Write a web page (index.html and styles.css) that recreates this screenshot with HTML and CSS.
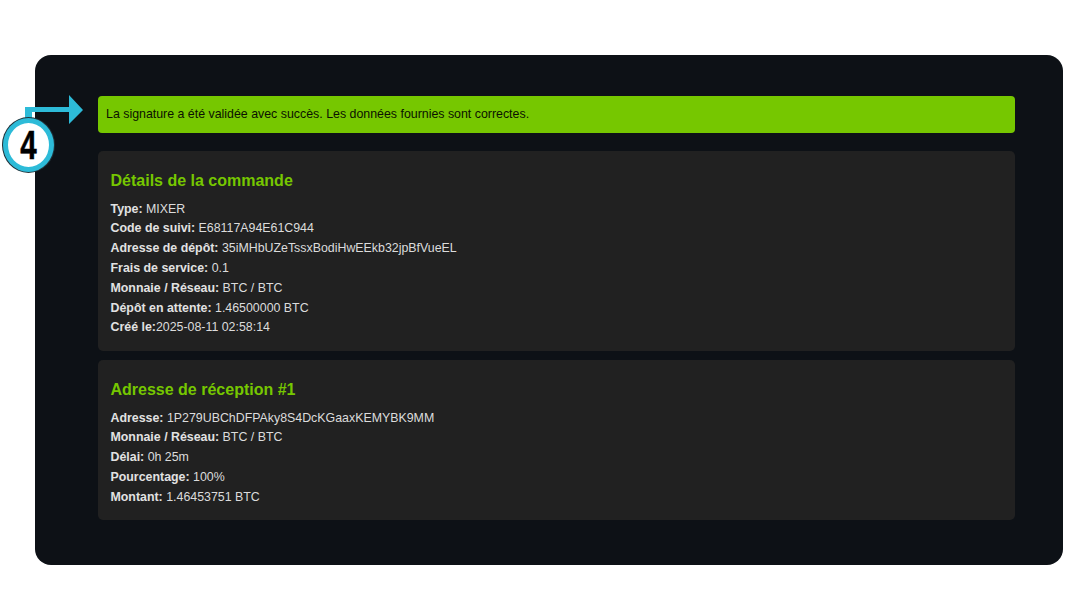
FILE: index.html
```html
<!DOCTYPE html>
<html lang="fr">
<head>
  <meta charset="UTF-8">
  <title>Signature</title>
  <link rel="stylesheet" href="styles.css">
</head>
<body>
  <div class="panel">
    <div class="alert">La signature a été validée avec succès. Les données fournies sont correctes.</div>

    <div class="card">
      <h3>Détails de la commande</h3>
      <p><strong>Type:</strong> MIXER</p>
      <p><strong>Code de suivi:</strong> E68117A94E61C944</p>
      <p><strong>Adresse de dépôt:</strong> 35iMHbUZeTssxBodiHwEEkb32jpBfVueEL</p>
      <p><strong>Frais de service:</strong> 0.1</p>
      <p><strong>Monnaie / Réseau:</strong> BTC / BTC</p>
      <p><strong>Dépôt en attente:</strong> 1.46500000 BTC</p>
      <p><strong>Créé le:</strong>2025-08-11 02:58:14</p>
    </div>

    <div class="card card-second">
      <h3>Adresse de réception #1</h3>
      <p><strong>Adresse:</strong> 1P279UBChDFPAky8S4DcKGaaxKEMYBK9MM</p>
      <p><strong>Monnaie / Réseau:</strong> BTC / BTC</p>
      <p><strong>Délai:</strong> 0h 25m</p>
      <p><strong>Pourcentage:</strong> 100%</p>
      <p><strong>Montant:</strong> 1.46453751 BTC</p>
    </div>
  </div>

  <!-- step marker drawn over the page -->
  <svg class="arrow" width="62" height="36" viewBox="0 0 62 36">
    <path d="M1 26V13H45V1L59 16L45 30V18H8V26Z" fill="#2dbbd8"/>
  </svg>
  <div class="step"><span>4</span></div>
</body>
</html>
```

FILE: styles.css
```css
* {
  box-sizing: border-box;
}

html, body {
  margin: 0;
  padding: 0;
}

body {
  font-family: 'Liberation Sans', Arial, sans-serif;
  background-color: #fff;
  height: 604px;
  padding: 55px 23px 0 35px;
  overflow: hidden;
}

.panel {
  background-color: #0d1116;
  height: 510px;
  border-radius: 16px;
  padding: 41px 48px 0 63px;
}

.alert {
  background-color: #76c700;
  color: #0b1200;
  font-size: 12.38px;
  line-height: 37px;
  height: 37px;
  padding: 0 8px;
  border-radius: 4px;
  margin-bottom: 18px;
}

.card {
  background-color: #212121;
  border-radius: 5px;
  height: 200px;
  padding: 20px 12.5px 0;
}

.card-second {
  height: 160px;
  margin-top: 9px;
}

.card h3 {
  margin: 0 0 8.5px;
  color: #76c700;
  font-size: 16px;
  line-height: 20px;
  font-weight: bold;
}

.card p {
  margin: 0;
  color: #dcdcdc;
  font-size: 12.38px;
  line-height: 19.83px;
}

.card strong {
  color: #e2e2e2;
}

.arrow {
  position: absolute;
  left: 24px;
  top: 94px;
}

.step {
  position: absolute;
  left: 3px;
  top: 118px;
  width: 51px;
  height: 54px;
  border-radius: 50%;
  background-color: #fff;
  border: 5px solid #2dbbd8;
  box-shadow: 0 0 0 1px #20323a;
  display: flex;
  align-items: center;
  justify-content: center;
}

.step span {
  font-size: 41px;
  font-weight: bold;
  color: #000;
  line-height: 1;
  transform: scaleX(0.72);
  -webkit-text-stroke: 0.6px #000;
}
```
